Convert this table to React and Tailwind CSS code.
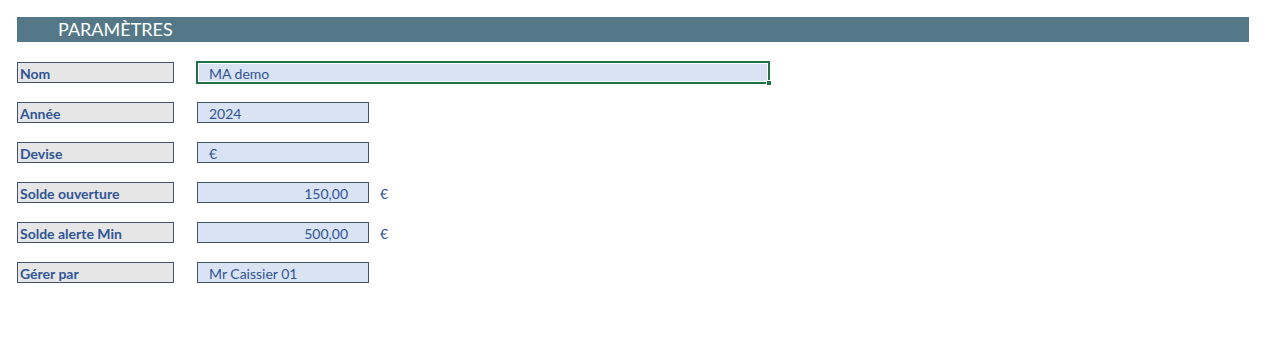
const ROWS = [
  { label: "Nom", value: "MA demo", wide: true },
  { label: "Année", value: "2024" },
  { label: "Devise", value: "€" },
  { label: "Solde ouverture", value: "150,00", num: true, unit: "€" },
  { label: "Solde alerte Min", value: "500,00", num: true, unit: "€" },
  { label: "Gérer par", value: "Mr Caissier 01" },
]

function Row({ row }) {
  return (
    <div className="flex items-center h-[21px]">
      <div className="w-[157px] h-[21px] border border-[#44546a] bg-[#e7e6e6] pl-[2px] pt-[1px] flex items-center text-[14px] font-bold text-[#2f5597]">
        {row.label}
      </div>
      {row.wide ? (
        <div className="relative ml-[22px] w-[574px] h-[23px] border-2 border-[#217346] bg-[#dae3f3] -my-[1px] flex items-center">
          <div className="absolute inset-0 border border-white" />
          <span className="pl-[11px] pt-[1px] text-[14px] text-[#2f5597]">{row.value}</span>
          <div className="absolute -right-[4px] -bottom-[4px] w-[6px] h-[6px] bg-[#217346] border border-white" />
        </div>
      ) : (
        <div
          className={`ml-[23px] w-[172px] h-[21px] border border-[#44546a] bg-[#dae3f3] pt-[1px] flex items-center text-[14px] text-[#2f5597] ${
            row.num ? "justify-end pr-[20px]" : "pl-[11px]"
          }`}
        >
          {row.value}
        </div>
      )}
      {row.unit && <span className="ml-[11px] pt-[1px] text-[14px] text-[#2f5597]">{row.unit}</span>}
    </div>
  )
}

export default function App() {
  return (
    <div className="w-[1266px] h-[358px] bg-white px-[17px] pt-[17px] font-['Lato',sans-serif]">
      <div className="h-[25px] bg-[#557888] flex items-center pl-[41px] text-[18px] text-white">
        PARAMÈTRES
      </div>
      <div className="mt-[20px] flex flex-col gap-[19px]">
        {ROWS.map((row) => (
          <Row key={row.label} row={row} />
        ))}
      </div>
    </div>
  )
}
